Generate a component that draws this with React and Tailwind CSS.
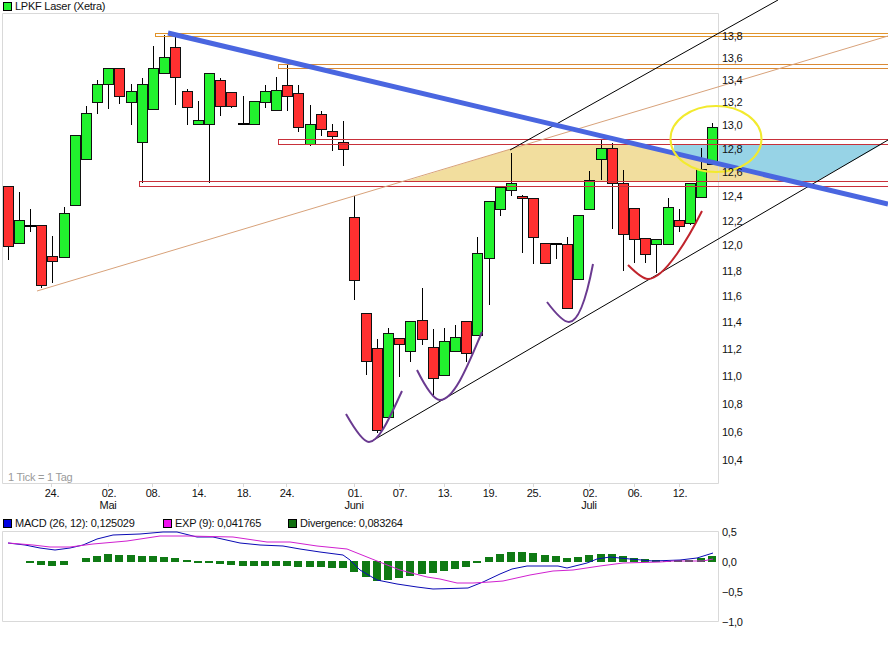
import React from 'react';

// cx, wick top, wick bottom, body top, body bottom, colour (f = flat doji)
const candles = [
  [8.5, 186, 260, 186.5, 246, 'r'], [19, 192, 243, 220.5, 243, 'g'], [30, 209, 232, 226, 226, 'f'],
  [41, 225, 288, 225.5, 285.5, 'r'], [52.5, 236, 283, 256.5, 261.5, 'r'], [64, 207, 257, 213.5, 257, 'g'],
  [75, 135, 205, 135.5, 205, 'g'], [86, 106, 159, 113.5, 159, 'g'], [97, 80, 114, 84.5, 102, 'g'],
  [108, 68, 109, 68.5, 84, 'g'], [119.5, 68, 104, 68.5, 96, 'r'], [131, 84, 125, 91.5, 102, 'g'],
  [142, 78, 183, 84.5, 142, 'g'], [153, 46, 109, 68.5, 109, 'g'], [164, 35, 73, 57.5, 73, 'g'],
  [175.5, 37, 105, 47.5, 77, 'r'], [187, 89, 125, 91.5, 107, 'r'], [198.5, 101, 124, 120.5, 124, 'g'],
  [209.5, 73, 183, 73.5, 124, 'g'], [220, 78, 116, 80.5, 106, 'r'], [231, 92, 108, 92.5, 106, 'r'],
  [243, 96, 124, 123.5, 123.5, 'f'], [254, 101, 124, 101.5, 124, 'g'], [265, 85, 108, 91.5, 102, 'g'],
  [276, 77, 110, 90.5, 110, 'g'], [287.5, 65, 111, 85.5, 96, 'r'], [298, 85, 132, 93.5, 127.5, 'r'],
  [310.5, 105, 146, 124.5, 144, 'g'], [321.5, 111, 136, 114.5, 129, 'r'], [332, 124, 151, 131.5, 136.5, 'r'],
  [343.5, 121, 166, 142.5, 149.5, 'r'], [354.5, 196, 300, 217.5, 280.5, 'r'], [366.5, 313, 375, 313.5, 361, 'r'],
  [377.5, 339, 433, 348.5, 430, 'r'], [388.5, 328, 417, 333.5, 417, 'g'], [399.5, 338, 377, 338.5, 344, 'r'],
  [410.5, 321, 362, 321.5, 351, 'g'], [422.5, 288, 345, 320.5, 339, 'r'], [433.5, 329, 395, 347.5, 378, 'r'],
  [444.5, 328, 375, 341, 375, 'g'], [455.5, 325, 351, 337, 351, 'g'], [466.5, 321, 362, 321.5, 353, 'r'],
  [477.5, 237, 335, 253.5, 335, 'g'], [489, 201, 305, 201.5, 258, 'g'], [500, 187, 216, 187.5, 209, 'g'],
  [511.5, 153, 196, 183.5, 190.5, 'g'], [522.5, 195, 253, 196.5, 198.5, 'r'], [533.5, 198, 264, 198.5, 237.5, 'r'],
  [545.5, 243, 263, 243.5, 263.5, 'r'], [556.5, 243, 259, 243.5, 243.5, 'f'], [567.5, 237, 308, 244.5, 308, 'r'],
  [578.5, 215, 279, 215.5, 279.5, 'g'], [589.5, 171, 209, 180.5, 209.5, 'g'], [601.5, 139, 180, 148.5, 159.5, 'g'],
  [612.5, 143, 229, 148.5, 183.5, 'r'], [623.5, 170, 271, 183.5, 234.5, 'r'], [634.5, 208, 263, 208.5, 239.5, 'r'],
  [645.5, 238, 263, 238.5, 254.5, 'r'], [656.5, 239, 273, 239.5, 244.5, 'g'], [668.5, 198, 244, 207.5, 244.5, 'g'],
  [679.5, 209, 232, 220.5, 226.5, 'r'], [690.5, 183, 225, 183.5, 223, 'g'], [701.5, 148, 197, 169.5, 197.5, 'g'],
  [712.5, 123, 164, 127.5, 164.5, 'g'],
];

const prices = [
  ['13,8', 36], ['13,6', 58], ['13,4', 80], ['13,2', 102], ['13,0', 125], ['12,8', 149],
  ['12,6', 172], ['12,4', 196], ['12,2', 221], ['12,0', 245], ['11,8', 271], ['11,6', 296],
  ['11,4', 322], ['11,2', 349], ['11,0', 376], ['10,8', 404], ['10,6', 432], ['10,4', 460],
];

const dates = [
  ['24.', 51], ['02.', 108], ['08.', 152], ['14.', 198], ['18.', 243], ['24.', 286], ['01.', 354],
  ['07.', 399], ['13.', 444], ['19.', 489], ['25.', 533], ['02.', 589], ['06.', 634], ['12.', 679],
];

const months = [['Mai', 108], ['Juni', 354], ['Juli', 589]];

const macdLine =
  '8,543 25,545 40,548 55,550 70,548 83,545 97,539 113,535 140,534 163,532 177,532 197,537 213,537 240,543 260,545 283,546 300,549 320,552 343,555 350,560 360,570 377,580 397,584 417,587 433,589 468,588 483,582 500,574 512,569 527,566 558,566 567,568 587,563 597,559 610,557 630,559 653,561 680,560 697,558 713,553';
const expLine =
  '8,543 33,545 50,547 70,547 93,544 127,541 160,536 187,536 233,537 267,542 290,542 317,546 347,549 377,561 400,570 427,577 440,579 457,583 473,583 490,582 503,581 530,575 553,571 573,570 600,566 623,563 660,562 673,561 703,561 713,559';

// left edge, top, bottom of each divergence bar
const bars = [
  [26, 561, 563], [37, 561, 565], [48, 561, 566], [60, 561, 565], [82, 558, 562], [93, 556, 562],
  [104, 554, 562], [115, 555, 562], [127, 555, 562], [138, 556, 562], [149, 556, 562], [160, 557, 562],
  [171, 558, 562], [183, 560, 562], [194, 561, 563], [205, 561, 563], [216, 561, 564], [227, 561, 565],
  [239, 561, 566], [250, 561, 566], [261, 561, 566], [272, 561, 566], [283, 561, 566], [294, 561, 567],
  [306, 561, 567], [317, 561, 567], [328, 561, 568], [339, 561, 568], [350, 561, 572], [362, 561, 577],
  [373, 561, 581], [384, 561, 580], [395, 561, 578], [406, 561, 576], [418, 561, 574], [429, 561, 573],
  [440, 561, 571], [451, 561, 569], [462, 561, 567], [473, 561, 563], [485, 557, 562], [496, 554, 562],
  [507, 552, 562], [518, 552, 562], [529, 553, 562], [541, 555, 562], [552, 556, 562], [563, 558, 562],
  [574, 557, 562], [585, 555, 562], [597, 554, 562], [608, 554, 562], [619, 556, 562], [630, 558, 562],
  [641, 559, 562], [652, 560, 562], [663, 561, 562], [674, 560, 562], [685, 560, 562], [697, 558, 562],
  [708, 556, 562],
];

const Candle = ({ c }) => {
  const [cx, high, low, top, bottom, kind] = c;
  const wick = Math.floor(cx) + 0.5;
  const left = Math.floor(cx) - 4.5;
  return (
    <g>
      <line x1={wick} x2={wick} y1={high} y2={low} stroke="#000" />
      {kind === 'f' ? (
        <rect x={left - 1} y={top - 1} width="11" height="2" fill="#000" />
      ) : (
        <rect
          x={left}
          y={top}
          width="10"
          height={bottom - top}
          fill={kind === 'g' ? '#22f22e' : '#ff3030'}
          stroke="#111"
        />
      )}
    </g>
  );
};

const Swatch = ({ color }) => <span className={`w-[9px] h-[9px] border border-black ${color}`} />;

const App = () => {
  return (
    <div className="w-[888px] h-[648px] overflow-hidden bg-white text-[11px] leading-none tracking-[-0.25px] text-[#111] font-['Liberation_Sans',Arial,sans-serif]">
      {/* Title legend */}
      <div className="h-[13px] pl-[3px] flex items-center gap-[3px]">
        <Swatch color="bg-[#22f22e]" />
        <span>LPKF Laser (Xetra)</span>
      </div>

      {/* Price chart */}
      <svg width="888" height="503" viewBox="0 13 888 503" className="block overflow-visible">
        <polygon points="405,181.5 525,144.5 637,144.5 792,181.5" fill="#f2de9e" />
        <polygon points="674,153 674,144.5 882,144.5 816,181.5 792,181.5" fill="#97d3e6" />

        <path d="M2.5 483.5V13.5H718.5V483.5H2.5" fill="none" stroke="#d9d9d9" />
        {dates.map(([, x], i) => (
          <line key={i} x1={x + 0.5} x2={x + 0.5} y1="484" y2="487" stroke="#d9d9d9" />
        ))}

        <g shapeRendering="crispEdges">
          {candles.map((c, i) => (
            <Candle key={i} c={c} />
          ))}
        </g>

        <g fill="none" shapeRendering="crispEdges">
          <path d="M888 33.5H155.5V36.5H888" stroke="#e0942c" />
          <path d="M888 64.5H278.5V68.5H888" stroke="#d98a36" />
          <path d="M888 139.5H278.5V144.5H888" stroke="#c8303a" />
          <path d="M888 181.5H139.5V186.5H888" stroke="#c8303a" />
        </g>

        <line x1="37" y1="291" x2="888" y2="36" stroke="#d8a27a" />
        <line x1="510" y1="150" x2="778" y2="0" stroke="#000" />
        <line x1="372" y1="441" x2="888" y2="140" stroke="#000" />
        <line x1="168" y1="33" x2="888" y2="204" stroke="#4a66e0" strokeWidth="5" />

        <g fill="none" strokeWidth="2">
          <path d="M346 414Q362 442 369 442C380 442 392 412 402 391" stroke="#6a3a90" />
          <path d="M417 370Q432 400 440 400C455 400 470 360 482 332" stroke="#6a3a90" />
          <path d="M547 302Q562 322 569 322C580 322 588 290 593 264" stroke="#6a3a90" />
          <path d="M628 265Q642 279 648 279C665 279 690 235 702 211" stroke="#c0242c" />
        </g>
        <ellipse cx="716" cy="139" rx="45.5" ry="33" fill="none" stroke="#f2ea2e" strokeWidth="2" />

        <text x="8" y="481" fill="#9a9a9a" fontSize="11">1 Tick = 1 Tag</text>
        {prices.map(([label, y]) => (
          <text key={label} x="722" y={y + 4} fontSize="11" fill="#111">{label}</text>
        ))}
        {dates.map(([label, x], i) => (
          <text key={i} x={x + 1} y="497" fontSize="11" textAnchor="middle" fill="#111">{label}</text>
        ))}
        {months.map(([label, x]) => (
          <text key={label} x={x} y="509" fontSize="11" textAnchor="middle" fill="#111">{label}</text>
        ))}
      </svg>

      {/* MACD legend */}
      <div className="h-[15px] pl-[3px] flex items-center">
        <div className="w-[160px] flex items-center gap-[3px]">
          <Swatch color="bg-[#0000e0]" />
          <span>MACD (26, 12): 0,125029</span>
        </div>
        <div className="w-[125px] flex items-center gap-[3px]">
          <Swatch color="bg-[#f010f0]" />
          <span>EXP (9): 0,041765</span>
        </div>
        <div className="flex items-center gap-[3px]">
          <Swatch color="bg-[#107010]" />
          <span>Divergence: 0,083264</span>
        </div>
      </div>

      {/* MACD chart */}
      <svg width="888" height="117" viewBox="0 531 888 117" className="block overflow-visible">
        <path d="M2.5 621.5V531.5H718.5V621.5H2.5" fill="none" stroke="#d9d9d9" />
        <g fill="#0f7a14" shapeRendering="crispEdges">
          {bars.map(([x, top, bottom]) => (
            <rect key={x} x={x} y={top} width="8" height={bottom - top} />
          ))}
        </g>
        <polyline points={macdLine} fill="none" stroke="#0a0ab4" />
        <polyline points={expLine} fill="none" stroke="#d020d0" />
        <text x="722" y="536" fontSize="11" fill="#111">0,5</text>
        <text x="722" y="566" fontSize="11" fill="#111">0,0</text>
        <text x="722" y="596" fontSize="11" fill="#111">−0,5</text>
        <text x="722" y="626" fontSize="11" fill="#111">−1,0</text>
      </svg>
    </div>
  );
};

export default App;
